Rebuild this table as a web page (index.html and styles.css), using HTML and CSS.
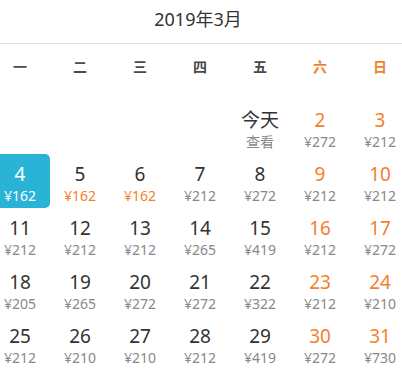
FILE: index.html
```html
<!DOCTYPE html>
<html lang="zh-CN">
<head>
<meta charset="utf-8">
<title>2019年3月</title>
<link rel="stylesheet" href="styles.css">
</head>
<body>
<div class="calendar">
  <div class="title">2019年3月</div>
  <div class="weekdays">
    <span>一</span><span>二</span><span>三</span><span>四</span><span>五</span><span class="wk">六</span><span class="wk">日</span>
  </div>
  <div class="days">
    <div class="cell"></div>
    <div class="cell"></div>
    <div class="cell"></div>
    <div class="cell"></div>
    <div class="cell"><span class="num">今天</span><span class="price">查看</span></div>
    <div class="cell wk"><span class="num">2</span><span class="price">¥272</span></div>
    <div class="cell wk"><span class="num">3</span><span class="price">¥212</span></div>

    <div class="cell active"><span class="num">4</span><span class="price">¥162</span></div>
    <div class="cell"><span class="num">5</span><span class="price low">¥162</span></div>
    <div class="cell"><span class="num">6</span><span class="price low">¥162</span></div>
    <div class="cell"><span class="num">7</span><span class="price">¥212</span></div>
    <div class="cell"><span class="num">8</span><span class="price">¥272</span></div>
    <div class="cell wk"><span class="num">9</span><span class="price">¥212</span></div>
    <div class="cell wk"><span class="num">10</span><span class="price">¥212</span></div>

    <div class="cell"><span class="num">11</span><span class="price">¥212</span></div>
    <div class="cell"><span class="num">12</span><span class="price">¥212</span></div>
    <div class="cell"><span class="num">13</span><span class="price">¥212</span></div>
    <div class="cell"><span class="num">14</span><span class="price">¥265</span></div>
    <div class="cell"><span class="num">15</span><span class="price">¥419</span></div>
    <div class="cell wk"><span class="num">16</span><span class="price">¥212</span></div>
    <div class="cell wk"><span class="num">17</span><span class="price">¥272</span></div>

    <div class="cell"><span class="num">18</span><span class="price">¥205</span></div>
    <div class="cell"><span class="num">19</span><span class="price">¥265</span></div>
    <div class="cell"><span class="num">20</span><span class="price">¥272</span></div>
    <div class="cell"><span class="num">21</span><span class="price">¥272</span></div>
    <div class="cell"><span class="num">22</span><span class="price">¥322</span></div>
    <div class="cell wk"><span class="num">23</span><span class="price">¥212</span></div>
    <div class="cell wk"><span class="num">24</span><span class="price">¥210</span></div>

    <div class="cell"><span class="num">25</span><span class="price">¥212</span></div>
    <div class="cell"><span class="num">26</span><span class="price">¥210</span></div>
    <div class="cell"><span class="num">27</span><span class="price">¥210</span></div>
    <div class="cell"><span class="num">28</span><span class="price">¥212</span></div>
    <div class="cell"><span class="num">29</span><span class="price">¥419</span></div>
    <div class="cell wk"><span class="num">30</span><span class="price">¥272</span></div>
    <div class="cell wk"><span class="num">31</span><span class="price">¥730</span></div>
  </div>
</div>
</body>
</html>
```

FILE: styles.css
```css
html, body {
  margin: 0;
  padding: 0;
  background: #fff;
  overflow: hidden;
}

body {
  font-family: "Noto Sans", "Noto Sans CJK SC", sans-serif;
  color: #333;
}

.calendar {
  width: 402px;
}

.title {
  height: 44px;
  box-sizing: border-box;
  padding-top: 6px;
  padding-right: 6px;
  line-height: 26px;
  font-size: 18px;
  text-align: center;
  color: #333;
  border-bottom: 1px solid #e0e0e0;
}

.weekdays {
  display: grid;
  grid-template-columns: repeat(7, 60px);
  margin-left: -10px;
  padding-top: 12px;
  height: 44px;
  box-sizing: border-box;
  line-height: 20px;
  font-size: 14px;
  font-weight: bold;
  text-align: center;
  color: #4a4a4a;
  font-family: "Noto Sans CJK SC", sans-serif;
}

.weekdays .wk {
  color: #f47f2c;
}

.days {
  display: grid;
  grid-template-columns: repeat(7, 60px);
  grid-auto-rows: 54px;
  margin-left: -10px;
  margin-top: 12px;
}

.cell {
  display: flex;
  flex-direction: column;
  align-items: center;
  padding-top: 8px;
  box-sizing: border-box;
  height: 54px;
}

.num {
  font-size: 19px;
  line-height: 25px;
  color: #333;
}

.price {
  font-size: 14px;
  line-height: 17px;
  color: #888;
}

.price.low {
  color: #f47f2c;
}

.cell.wk .num {
  color: #f47f2c;
}

.cell.active {
  background: #29b3d7;
  border-radius: 5px;
}

.cell.active .num,
.cell.active .price {
  color: #fff;
}
```
